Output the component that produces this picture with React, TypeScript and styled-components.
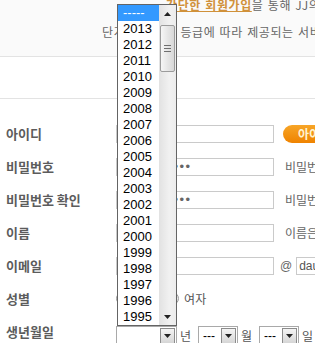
import React from 'react';
import styled, { createGlobalStyle } from 'styled-components';

const GlobalStyle = createGlobalStyle`
  html, body { margin: 0; padding: 0; background: #fff; }
  body { font-family: "Noto Sans CJK KR", "Noto Sans", sans-serif; }
  * { box-sizing: border-box; }
`;

const Page = styled.div`
  position: relative;
  width: 315px;
  height: 343px;
  overflow: hidden;
  background: #fff;
`;

const Intro = styled.section`
  height: 57px;
  border-bottom: 1px solid #e3e3e3;
  background: #fafafa;
  overflow: hidden;
`;

const IntroText = styled.div`
  display: flex;
  flex-direction: column;
  gap: 11px;
  margin-top: -3px;
`;

const IntroLine = styled.p<{ $indent: number }>`
  margin: 0;
  padding-left: ${p => p.$indent}px;
  white-space: nowrap;
  font-size: 12px;
  line-height: 16px;
  color: #666;
  letter-spacing: 0.6px;
  word-spacing: 1px;
`;

const JoinLink = styled.a`
  color: #d0913a;
  font-weight: bold;
  text-decoration: underline;
`;

const StepBand = styled.div`
  height: 42px;
  border-bottom: 1px solid #e3e3e3;
  background: #fff;
`;

const Form = styled.form`
  padding-top: 18px;
`;

const Row = styled.div`
  display: grid;
  grid-template-columns: 116px 1fr;
  align-items: center;
  height: 33px;
`;

const Label = styled.span`
  padding-left: 6px;
  font-size: 13px;
  font-weight: bold;
  color: #5c5c5c;
  white-space: nowrap;
`;

const Field = styled.div<{ $shift?: number }>`
  display: flex;
  align-items: center;
  white-space: nowrap;
  padding-top: ${p => p.$shift ?? 0}px;
`;

const TextInput = styled.input<{ $w?: number }>`
  width: ${p => p.$w ?? 158}px;
  height: 18px;
  border: 1px solid #cacaca;
  padding: 0 2px;
  margin: 0;
  font: 12px "Liberation Sans", sans-serif;
  color: #555;
  background: #fff;
  outline: none;
`;

const PasswordInput = styled(TextInput)`
  color: #666;
  letter-spacing: 1.5px;
  font-size: 13px;
`;

const DupButton = styled.button`
  margin-left: 9px;
  height: 18px;
  padding: 0 10px 0 15px;
  border: none;
  border-radius: 9px;
  background: linear-gradient(#f7a527, #ef8300);
  color: #fff3cf;
  font: bold 12px "Noto Sans CJK KR", sans-serif;
  line-height: 18px;
  white-space: nowrap;
`;

const Helper = styled.span<{ $gap?: number }>`
  margin-left: ${p => p.$gap ?? 11}px;
  font-size: 12px;
  color: #666;
  white-space: nowrap;
`;

const AtSign = styled.span`
  margin: 0 4px 0 6px;
  font: 12px "Liberation Sans", sans-serif;
  color: #666;
`;

const RadioDot = styled.input`
  appearance: none;
  width: 13px;
  height: 13px;
  margin: 0;
  border: 1px solid #9a9a9a;
  border-radius: 50%;
  background: radial-gradient(circle at 40% 40%, #ffffff, #e2e2e2);
`;

const RadioText = styled.span`
  margin: 0 10px 0 5px;
  font-size: 12px;
  color: #555;
`;

const SelectBox = styled.div<{ $w: number }>`
  display: flex;
  align-items: stretch;
  width: ${p => p.$w}px;
  height: 20px;
  border: 1px solid #a9a9a9;
  background: #fff;
`;

const SelectValue = styled.span`
  flex: 1;
  padding-left: 4px;
  font: 12px/18px "Liberation Sans", sans-serif;
  color: #000;
`;

const SelectArrow = styled.span`
  width: 15px;
  margin: 1px;
  border: 1px solid #8c8c8c;
  background: linear-gradient(#f4f4f4, #d6d6d6);
  display: flex;
  align-items: center;
  justify-content: center;
`;

const Unit = styled.span`
  margin: 0 7px 0 3px;
  font-size: 12px;
  color: #555;
`;

/* open dropdown list overlay */
const DropList = styled.div`
  position: absolute;
  left: 117px;
  top: 4px;
  width: 60px;
  height: 322px;
  border: 1px solid #646464;
  background: #fff;
  display: flex;
`;

const Options = styled.ul`
  flex: 1;
  margin: 0;
  padding: 0;
  list-style: none;
`;

const Option = styled.li<{ $active?: boolean }>`
  height: 16px;
  padding-left: 5px;
  font: 13px/16px "Liberation Sans", sans-serif;
  color: ${p => (p.$active ? '#fff' : '#000')};
  background: ${p => (p.$active ? '#3399ff' : 'transparent')};
`;

const ScrollBar = styled.div`
  width: 17px;
  display: flex;
  flex-direction: column;
  background: linear-gradient(to right, #e2e2e2, #f1f1f1 60%, #ececec);
`;

const ScrollButton = styled.div`
  height: 17px;
  display: flex;
  align-items: center;
  justify-content: center;
`;

const Track = styled.div`
  flex: 1;
  padding: 3px 1px 0;
`;

const Thumb = styled.div`
  height: 47px;
  border: 1px solid #9b9b9b;
  border-radius: 2px;
  background: linear-gradient(to right, #f6f6f6, #e6e6e6 50%, #d8d8d8);
  display: flex;
  flex-direction: column;
  align-items: center;
  justify-content: center;
  gap: 2px;
`;

const Grip = styled.span`
  width: 7px;
  height: 1px;
  background: #6f6f6f;
`;

const Tri = ({ up }: { up?: boolean }) => (
  <svg width="7" height="4" viewBox="0 0 7 4">
    <polygon points={up ? '0,4 7,4 3.5,0' : '0,0 7,0 3.5,4'} fill="#222" />
  </svg>
);

const Select = ({ w, value }: { w: number; value: string }) => (
  <SelectBox $w={w}>
    <SelectValue>{value}</SelectValue>
    <SelectArrow>
      <Tri />
    </SelectArrow>
  </SelectBox>
);

const years = ['-----', ...Array.from({ length: 19 }, (_, i) => String(2013 - i))];

export default function App() {
  return (
    <Page>
      <GlobalStyle />
      <Intro>
        <IntroText>
          <IntroLine $indent={166}>
            <JoinLink>간단한 회원가입</JoinLink>을 통해 JJ의 다양한 서비스를 이용하세요.
          </IntroLine>
          <IntroLine $indent={102}>
            단계별 멤버십 등급에 따라 제공되는 서비스가 다릅니다.
          </IntroLine>
        </IntroText>
      </Intro>
      <StepBand />
      <Form>
        <Row>
          <Label>아이디</Label>
          <Field>
            <TextInput readOnly />
            <DupButton type="button">아이디 중복확인</DupButton>
          </Field>
        </Row>
        <Row>
          <Label>비밀번호</Label>
          <Field>
            <PasswordInput type="password" value="abcdefghijkl" readOnly />
            <Helper>비밀번호는 영문, 숫자 조합</Helper>
          </Field>
        </Row>
        <Row>
          <Label>비밀번호 확인</Label>
          <Field>
            <PasswordInput type="password" value="abcdefghijkl" readOnly />
            <Helper>비밀번호를 한번 더</Helper>
          </Field>
        </Row>
        <Row>
          <Label>이름</Label>
          <Field>
            <TextInput readOnly />
            <Helper>이름은 실명으로</Helper>
          </Field>
        </Row>
        <Row>
          <Label>이메일</Label>
          <Field>
            <TextInput readOnly />
            <AtSign>@</AtSign>
            <TextInput $w={80} value="daum.net" readOnly />
          </Field>
        </Row>
        <Row>
          <Label>성별</Label>
          <Field>
            <RadioDot type="radio" name="g" />
            <RadioText>남자</RadioText>
            <RadioDot type="radio" name="g" />
            <RadioText>여자</RadioText>
          </Field>
        </Row>
        <Row>
          <Label>생년월일</Label>
          <Field $shift={8}>
            <Select w={61} value="" />
            <Unit>년</Unit>
            <Select w={40} value="---" />
            <Unit>월</Unit>
            <Select w={40} value="---" />
            <Unit>일</Unit>
          </Field>
        </Row>
      </Form>
      <DropList>
        <Options>
          {years.map((y, i) => (
            <Option key={y} $active={i === 0}>
              {y}
            </Option>
          ))}
        </Options>
        <ScrollBar>
          <ScrollButton>
            <Tri up />
          </ScrollButton>
          <Track>
            <Thumb>
              <Grip />
              <Grip />
              <Grip />
            </Thumb>
          </Track>
          <ScrollButton>
            <Tri />
          </ScrollButton>
        </ScrollBar>
      </DropList>
    </Page>
  );
}
